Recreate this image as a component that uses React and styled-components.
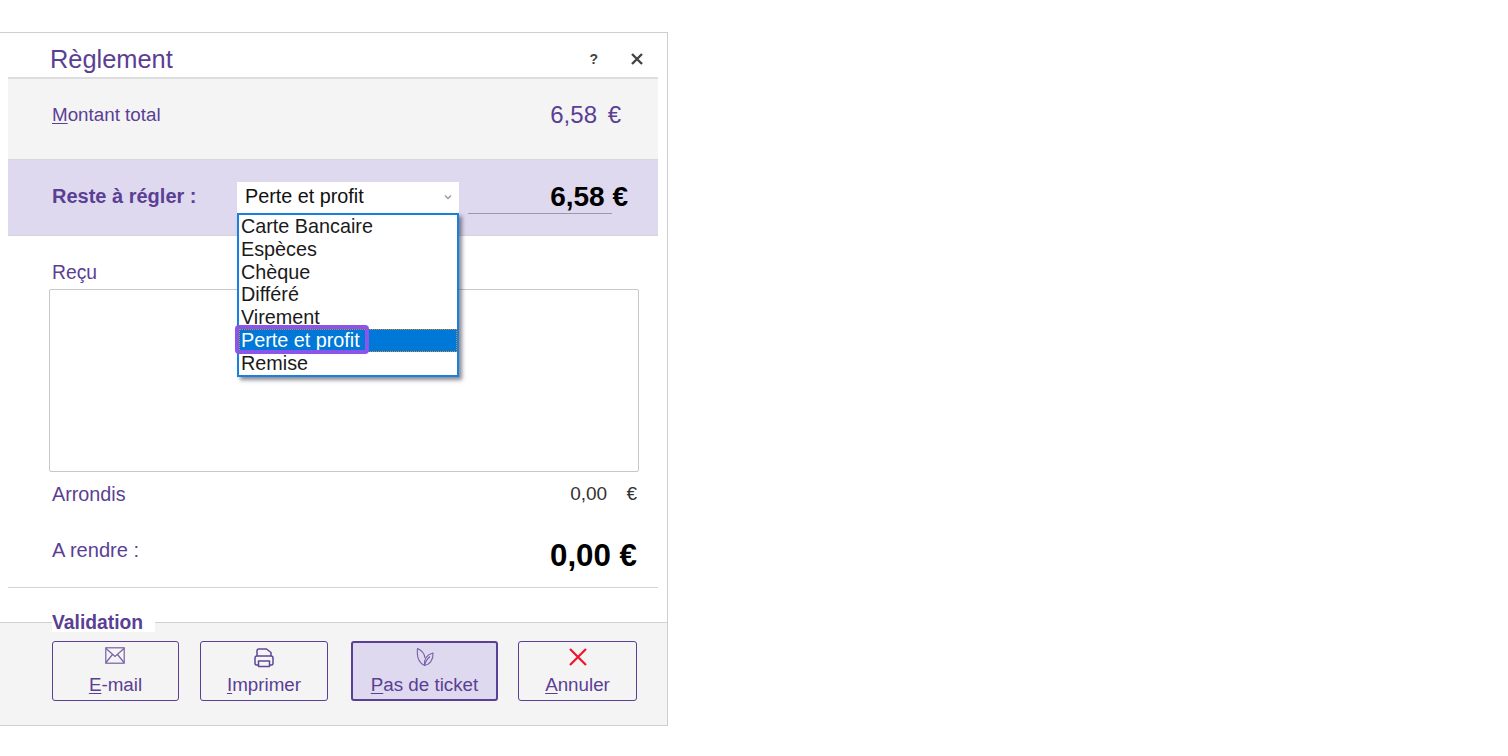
import styled, { createGlobalStyle } from "styled-components";

const purple = "#5a3f94";

const GlobalStyle = createGlobalStyle`
  html, body {
    margin: 0;
    background: #fff;
    font-family: "Liberation Sans", Arial, sans-serif;
  }
`;

const Page = styled.div`
  padding-top: 32px;
`;

const Window = styled.div`
  width: 667px;
  height: 692px;
  background: #fff;
  border: 1px solid #cfcfcf;
  border-left: none;
  display: flex;
  flex-direction: column;
`;

const Inner = styled.div`
  margin: 0 9px 0 8px;
  flex: 1;
  display: flex;
  flex-direction: column;
`;

const TitleBar = styled.div`
  height: 46px;
  box-sizing: border-box;
  padding: 8px 15px 0 42px;
  display: flex;
  align-items: center;
  border-bottom: 2px solid #dddddd;
`;

const Title = styled.div`
  flex: 1;
  font-size: 25.4px;
  color: ${purple};
`;

const Help = styled.span`
  font-size: 14px;
  font-weight: bold;
  color: #444;
  margin-right: 33px;
`;

const TotalBand = styled.div`
  height: 81px;
  box-sizing: border-box;
  background: #f4f4f4;
  border-bottom: 1px solid #d8d8d8;
  padding: 21px 37px 0 44px;
  display: flex;
  justify-content: space-between;
  align-items: flex-start;
  color: ${purple};
`;

const Label = styled.span`
  font-size: ${(props) => props.$size || 18.8}px;
  line-height: 30px;
  color: ${purple};
  u {
    text-underline-offset: 2px;
  }
`;

const TotalAmount = styled.span`
  font-size: 24px;
  line-height: 30px;
  word-spacing: 4px;
`;

const DueBand = styled.div`
  height: 76px;
  box-sizing: border-box;
  background: #dfd9f0;
  border-bottom: 1px solid #d4d4d4;
  padding: 22px 0 0 44px;
  display: flex;
  align-items: flex-start;
`;

const DueLabel = styled.span`
  width: 185px;
  font-size: 20px;
  font-weight: bold;
  line-height: 29px;
  color: ${purple};
`;

const SelectWrap = styled.div`
  position: relative;
  width: 222px;
`;

const SelectBox = styled.div`
  height: 32px;
  box-sizing: border-box;
  background: #fff;
  padding: 0 7px 2px 8px;
  border-bottom: 1px solid #4a3a8c;
  display: flex;
  align-items: center;
  justify-content: space-between;
  font-size: 19.8px;
  color: #111;
`;

const DropList = styled.ul`
  position: absolute;
  top: 31px;
  left: 0;
  z-index: 2;
  width: 222px;
  box-sizing: border-box;
  margin: 0;
  padding: 0;
  list-style: none;
  background: #fff;
  border: 2px solid #1a80dc;
  box-shadow: 3px 3px 4px rgba(40, 40, 60, 0.55);
`;

const DropItem = styled.li`
  position: relative;
  height: 22.8px;
  line-height: 22.8px;
  padding-left: 2px;
  font-size: 19.8px;
  color: ${(props) => (props.$selected ? "#fff" : "#1a1a1a")};
  background: ${(props) => (props.$selected ? "#0078d7" : "transparent")};
  outline: ${(props) => (props.$selected ? "1px dotted #d98a2a" : "none")};
  outline-offset: -1px;
`;

const Callout = styled.span`
  position: absolute;
  left: -4px;
  top: -4px;
  width: 134px;
  height: 29px;
  box-sizing: border-box;
  border: 4px solid #8c55ea;
  border-radius: 4px;
`;

const DueField = styled.div`
  margin-left: 9px;
  width: 144px;
  height: 32px;
  box-sizing: border-box;
  border-bottom: 1px solid #9c97ad;
  display: flex;
  justify-content: flex-end;
`;

const DueAmount = styled.span`
  margin-right: -16px;
  font-size: 28px;
  font-weight: bold;
  line-height: 29px;
  color: #000;
`;

const Body = styled.div`
  flex: 1;
  padding: 20px 19px 0 41px;
  border-bottom: 1px solid #d4d4d4;
`;

const ReceivedLabel = styled(Label)`
  display: block;
  margin-left: 3px;
  line-height: 33px;
`;

const ReceivedBox = styled.div`
  height: 183px;
  box-sizing: border-box;
  border: 1px solid #c8c8c8;
  border-radius: 2px;
  background: #fff;
`;

const SummaryRow = styled.div`
  display: flex;
  justify-content: space-between;
  align-items: ${(props) => (props.$big ? "flex-start" : "center")};
  padding: 0 2px 0 3px;
  margin-top: ${(props) => props.$gap}px;
`;

const SmallValue = styled.span`
  font-size: 19px;
  line-height: 22px;
  color: #333;
  word-spacing: 14px;
`;

const BigValue = styled.span`
  font-size: 31.3px;
  font-weight: bold;
  line-height: 36px;
  color: #000;
  margin-top: 3px;
`;

const LegendRow = styled.div`
  height: 34px;
  padding-left: 44px;
  display: flex;
  align-items: flex-end;
`;

const Legend = styled.span`
  position: relative;
  z-index: 1;
  width: 103px;
  height: 24px;
  margin-bottom: -10px;
  background: #fff;
  font-size: 19.3px;
  font-weight: bold;
  line-height: 30px;
  color: ${purple};
`;

const Footer = styled.div`
  height: 103px;
  box-sizing: border-box;
  background: #f4f4f4;
  border-top: 1px solid #cfcfcf;
  padding: 18px 0 0 52px;
  display: flex;
  align-items: flex-start;
`;

const ActionButton = styled.button`
  width: ${(props) => props.$width}px;
  height: 60px;
  margin-right: ${(props) => props.$gap}px;
  box-sizing: border-box;
  padding: 0;
  display: flex;
  flex-direction: column;
  align-items: center;
  background: ${(props) => (props.$active ? "#dfd9f0" : "transparent")};
  border: ${(props) => (props.$active ? "2px" : "1px")} solid ${purple};
  border-radius: 3px;
  font-family: inherit;
  font-size: 18.8px;
  color: ${purple};
`;

const IconSlot = styled.span`
  height: ${(props) => (props.$active ? 30 : 31)}px;
  box-sizing: border-box;
  padding-bottom: ${(props) => props.$lift || 0}px;
  padding-right: ${(props) => props.$nudge || 0}px;
  display: flex;
  align-items: center;
  justify-content: center;
`;

const ButtonText = styled.span`
  line-height: 24px;
  u {
    text-underline-offset: 2px;
  }
`;

const options = ["Carte Bancaire", "Espèces", "Chèque", "Différé", "Virement", "Perte et profit", "Remise"];

const MailIcon = () => (
  <svg width="20" height="17" viewBox="0 0 20 17" fill="none" stroke="#7560a6" strokeWidth="1.2">
    <rect x="0.8" y="0.8" width="18.4" height="15.4" />
    <path d="M1 1.500 10 9.500 19 1.500M1 15.500 7.500 7.500M19 15.500 12.500 7.500" />
  </svg>
);

const PrinterIcon = () => (
  <svg width="20" height="20" viewBox="0 0 20 20" fill="none" stroke="#5f4797" strokeWidth="1.5" strokeLinejoin="round">
    <path d="M3 8V3q0-2 2-2h7.500L17 4.500V8" />
    <path d="M4 17H2.500Q1 17 1 15.500V10q0-2 2-2h14q2 0 2 2v5.500q0 1.500-1.500 1.500H16" />
    <rect x="4.500" y="13" width="11" height="5.500" />
  </svg>
);

const LeafIcon = () => (
  <svg width="18" height="20" viewBox="0 0 18 20" fill="none" stroke="#7560a6" strokeWidth="1.1" strokeLinejoin="round">
    <path d="M8.500 18.500C3 16 .5 10 1.500 1.500 6 3.500 8.500 6.500 9 11" />
    <path d="M8.500 18.500C8 12 11 7.500 17 6c.5 6.500-3 11.500-8.500 12.500Z" />
    <path d="M8.500 18.500C9.500 14.500 11.500 11.500 14 9.500" />
  </svg>
);

const RedCross = () => (
  <svg width="18" height="18" viewBox="0 0 18 18" stroke="#f01528" strokeWidth="2.2">
    <path d="M1 1 17 17M17 1 1 17" />
  </svg>
);

const CloseIcon = () => (
  <svg width="12" height="12" viewBox="0 0 12 12" stroke="#444" strokeWidth="2.4">
    <path d="M1 1 11 11M11 1 1 11" />
  </svg>
);

const Chevron = () => (
  <svg width="8" height="6" viewBox="0 0 8 6" fill="none" stroke="#9a9a9a" strokeWidth="1.4">
    <path d="M1 1.500 4 4.500 7 1.500" />
  </svg>
);

export default function App() {
  return (
    <Page>
      <GlobalStyle />
      <Window>
        <Inner>
          <TitleBar>
            <Title>Règlement</Title>
            <Help>?</Help>
            <CloseIcon />
          </TitleBar>
          <TotalBand>
            <Label>
              <u>M</u>ontant total
            </Label>
            <TotalAmount>6,58 €</TotalAmount>
          </TotalBand>
          <DueBand>
            <DueLabel>Reste à régler :</DueLabel>
            <SelectWrap>
              <SelectBox>
                Perte et profit
                <Chevron />
              </SelectBox>
              <DropList>
                {options.map((option) => (
                  <DropItem key={option} $selected={option === "Perte et profit"}>
                    {option}
                    {option === "Perte et profit" && <Callout />}
                  </DropItem>
                ))}
              </DropList>
            </SelectWrap>
            <DueField>
              <DueAmount>6,58 €</DueAmount>
            </DueField>
          </DueBand>
          <Body>
            <ReceivedLabel $size={19.3}>Reçu</ReceivedLabel>
            <ReceivedBox />
            <SummaryRow $gap={7}>
              <Label $size={19.8}>Arrondis</Label>
              <SmallValue>0,00 €</SmallValue>
            </SummaryRow>
            <SummaryRow $big $gap={26}>
              <Label $size={20.1}>A rendre :</Label>
              <BigValue>0,00 €</BigValue>
            </SummaryRow>
          </Body>
          <LegendRow>
            <Legend>Validation</Legend>
          </LegendRow>
        </Inner>
        <Footer>
          <ActionButton $width={127} $gap={21}>
            <IconSlot $lift={4} $nudge={2}><MailIcon /></IconSlot>
            <ButtonText><u>E</u>-mail</ButtonText>
          </ActionButton>
          <ActionButton $width={128} $gap={23}>
            <IconSlot><PrinterIcon /></IconSlot>
            <ButtonText><u>I</u>mprimer</ButtonText>
          </ActionButton>
          <ActionButton $width={147} $gap={20} $active>
            <IconSlot $active $lift={3}><LeafIcon /></IconSlot>
            <ButtonText><u>P</u>as de ticket</ButtonText>
          </ActionButton>
          <ActionButton $width={119} $gap={0}>
            <IconSlot $lift={2}><RedCross /></IconSlot>
            <ButtonText><u>A</u>nnuler</ButtonText>
          </ActionButton>
        </Footer>
      </Window>
    </Page>
  );
}
